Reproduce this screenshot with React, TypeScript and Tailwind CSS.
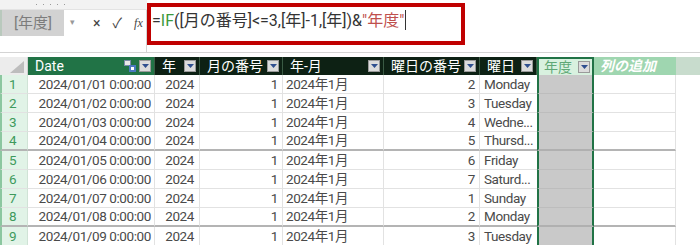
const font = { fontFamily: 'Roboto, "Noto Sans CJK JP", sans-serif' };

type Row = { n: number; date: string; wd: string; wn: number };

const rows: Row[] = [
  { n: 1, date: "2024/01/01 0:00:00", wn: 2, wd: "Monday" },
  { n: 2, date: "2024/01/02 0:00:00", wn: 3, wd: "Tuesday" },
  { n: 3, date: "2024/01/03 0:00:00", wn: 4, wd: "Wedne..." },
  { n: 4, date: "2024/01/04 0:00:00", wn: 5, wd: "Thursd..." },
  { n: 5, date: "2024/01/05 0:00:00", wn: 6, wd: "Friday" },
  { n: 6, date: "2024/01/06 0:00:00", wn: 7, wd: "Saturd..." },
  { n: 7, date: "2024/01/07 0:00:00", wn: 1, wd: "Sunday" },
  { n: 8, date: "2024/01/08 0:00:00", wn: 2, wd: "Monday" },
  { n: 9, date: "2024/01/09 0:00:00", wn: 3, wd: "Tuesday" },
];

function DropBtn() {
  return (
    <span className="w-[12px] h-[12px] flex items-center justify-center bg-[#dcdcdc] border border-[#9a9a9a] shrink-0">
      <svg width="7" height="4" viewBox="0 0 7 4">
        <path d="M0 0h7L3.5 4z" fill="#2f4f8f" />
      </svg>
    </span>
  );
}

function TableIcon() {
  return (
    <svg width="12" height="12" viewBox="0 0 12 12" className="shrink-0">
      <rect x="0.5" y="0.5" width="6" height="5" fill="#e8e8e8" stroke="#7a8aa8" strokeWidth="1" />
      <rect x="5" y="5" width="7" height="7" fill="#4a78c0" />
      <rect x="7" y="7" width="3" height="3" fill="#ffffff" />
    </svg>
  );
}

function HeadCell({ w, label, dark = true, icon = false }: { w: string; label: string; dark?: boolean; icon?: boolean }) {
  return (
    <div className={`${w} h-full flex items-center justify-between pl-[7px] pr-[3px] border-r border-[#3a5a44] ${dark ? "bg-[#0d2114]" : "bg-[#217346]"}`}>
      <span className="text-white text-[14px] leading-none whitespace-nowrap">{label}</span>
      <span className="flex items-center gap-[3px]">
        {icon && <TableIcon />}
        <DropBtn />
      </span>
    </div>
  );
}

export default function App() {
  return (
    <div className="w-[700px] h-[245px] bg-white overflow-hidden" style={font}>
      {/* formula bar */}
      <div className="flex h-[53px] border-b border-[#d4d4d4]">
        <div className="w-[147px] flex flex-col">
          <div className="h-[10px] bg-[#f2f2f2] border-b border-[#e3e3e3] flex items-center gap-[6px] pl-[36px]">
            {[0, 1, 2, 3, 4].map((i) => (
              <span key={i} className="w-[1px] h-[1px] bg-[#9a9a9a]" />
            ))}
          </div>
          <div className="flex h-[26px] items-center">
            <div className="w-[64px] h-full bg-[#d2d2d2] border-l-2 border-[#b9c9bd] flex items-center justify-center text-[#7c7c7c] text-[15px]">
              [年度]
            </div>
            <div className="w-[17px] h-full flex items-center justify-center text-[#999] text-[9px]">▾</div>
            <div className="flex-1 flex items-center pl-[12px] gap-[12px] text-[#444] border-r border-[#d4d4d4] h-full">
              <span className="text-[14px] leading-none">×</span>
              <span className="text-[14px] leading-none">✓</span>
              <span className="text-[12px] italic leading-none" style={{ fontFamily: '"Liberation Serif", serif' }}>fx</span>
            </div>
          </div>
          <div className="flex-1 border-r border-[#d4d4d4]" />
        </div>
        <div className="flex-1 pt-[3px]">
          <div className="w-[318px] h-[42px] border-4 border-[#c00000] flex items-start pt-[3px] pl-[1px] text-[16px] leading-[21px] text-[#333] whitespace-nowrap">
            <span>=</span>
            <span className="text-[#3b9a3b]">IF</span>
            <span>([月の番号]&lt;=3,[年]-1,[年])&amp;</span>
            <span className="text-[#c0504d]">"年度"</span>
            <span className="w-[1px] h-[20px] bg-[#333] ml-[1px]" />
          </div>
        </div>
      </div>

      {/* table */}
      <div className="mt-[4px] text-[13.5px] text-[#4a4a4a] tracking-[-0.4px]">
        <div className="flex h-[18px] tracking-normal">
          <div className="w-[28px] h-full bg-[#ececec] border-r border-[#d0d0d0] flex items-end justify-end pr-[3px] pb-[2px]">
            <svg width="14" height="12" viewBox="0 0 14 12">
              <path d="M14 0v12H0z" fill="#bdbdbd" />
            </svg>
          </div>
          <HeadCell w="w-[127px]" label="Date" dark={false} icon />
          <HeadCell w="w-[45px]" label="年" />
          <HeadCell w="w-[83px]" label="月の番号" />
          <HeadCell w="w-[101px]" label="年-月" />
          <HeadCell w="w-[96px]" label="曜日の番号" />
          <HeadCell w="w-[57px]" label="曜日" />
          <div className="w-[57px] h-full bg-[#d8f1df] border-2 border-b-0 border-[#217346] flex items-center justify-between pl-[5px] pr-[2px]">
            <span className="text-[#5fa876] text-[14px] leading-none">年度</span>
            <DropBtn />
          </div>
          <div className="w-[82px] h-full bg-[#9fd6b0] flex items-center pl-[6px] text-white italic font-bold text-[14px] leading-none">
            列の追加
          </div>
          <div className="flex-1 h-full bg-[#c8dccd]" />
        </div>
        {rows.map((r) => {
          const thick = r.n === 4 || r.n === 8;
          const b = thick ? "border-b-2 border-b-[#b4b4b4]" : "border-b border-b-[#e2e2e2]";
          return (
            <div key={r.n} className="flex h-[19px] whitespace-nowrap">
              <div className={`w-[28px] bg-[#e1f3e7] border-l-2 border-l-[#8cc7a0] border-r border-r-[#d0e3d6] ${b} flex items-center pl-[7px] text-[#3e9a5c]`}>
                {r.n}
              </div>
              <div className={`w-[127px] ${b} border-r border-r-[#e2e2e2] flex items-center justify-end pr-[3px]`}>{r.date}</div>
              <div className={`w-[45px] ${b} border-r border-r-[#e2e2e2] flex items-center justify-end pr-[5px]`}>2024</div>
              <div className={`w-[83px] ${b} border-r border-r-[#e2e2e2] flex items-center justify-end pr-[4px]`}>1</div>
              <div className={`w-[101px] ${b} border-r border-r-[#e2e2e2] flex items-center pl-[3px]`}>2024年1月</div>
              <div className={`w-[96px] ${b} border-r border-r-[#e2e2e2] flex items-center justify-end pr-[4px]`}>{r.wn}</div>
              <div className={`w-[57px] ${b} flex items-center pl-[4px] overflow-hidden`}>{r.wd}</div>
              <div className={`w-[57px] bg-[#c9c9c9] border-x-2 border-x-[#217346] ${thick ? "border-b-2 border-b-[#b0b0b0]" : "border-b border-b-[#bdbdbd]"}`} />
              <div className={`w-[82px] ${b} border-r border-r-[#e2e2e2]`} />
              <div className="flex-1" />
            </div>
          );
        })}
      </div>
    </div>
  );
}
